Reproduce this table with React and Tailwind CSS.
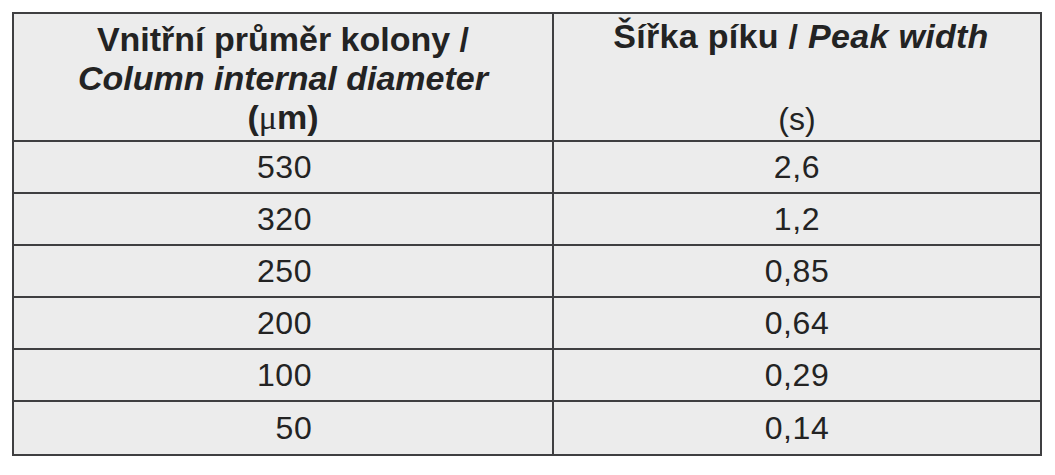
const rows = [
  ["530", "2,6"],
  ["320", "1,2"],
  ["250", "0,85"],
  ["200", "0,64"],
  ["100", "0,29"],
  ["50", "0,14"],
];

export default function App() {
  return (
    <div
      className="w-[1055px] h-[475px] bg-white pl-[12px] pt-[12px] text-[#232323]"
      style={{ fontFamily: '"Liberation Sans", Arial, sans-serif' }}
    >
      <div className="w-[1030px] border-2 border-[#3f3f41] bg-[#ececec] grid grid-cols-[540px_486px]">
        {/* header */}
        <div className="h-[128px] border-r-2 border-b-2 border-[#3f3f41] pt-[6px] text-center text-[34px] font-bold leading-[39px]">
          <div>Vnitřní průměr kolony /</div>
          <div className="italic">Column internal diameter</div>
          <div>
            (<span className="font-normal" style={{ fontFamily: '"Liberation Serif", serif' }}>μ</span>m)
          </div>
        </div>
        <div className="h-[128px] border-b-2 border-[#3f3f41] pt-[3px] pl-[8px] text-center text-[34px] leading-[39px]">
          <div className="font-bold tracking-[0.3px]">
            Šířka píku / <span className="italic">Peak width</span>
          </div>
          <div>&nbsp;</div>
          <div className="pt-[5px] pr-[8px] text-[32px]">(s)</div>
        </div>

        {rows.map(([d, w], i) => {
          const last = i === rows.length - 1;
          return [
            <div
              key={d + "a"}
              className={
                "h-[52px] border-r-2 border-[#3f3f41] flex items-center justify-center text-[32px] tracking-[0.6px] " +
                (last ? "" : "border-b-2")
              }
            >
              <span className={last ? "pl-[22px]" : "pl-[3px]"}>{d}</span>
            </div>,
            <div
              key={d + "b"}
              className={
                "h-[52px] border-[#3f3f41] flex items-center justify-center text-[32px] tracking-[0.6px] " +
                (last ? "" : "border-b-2")
              }
            >
              {w}
            </div>,
          ];
        })}
      </div>
    </div>
  );
}
